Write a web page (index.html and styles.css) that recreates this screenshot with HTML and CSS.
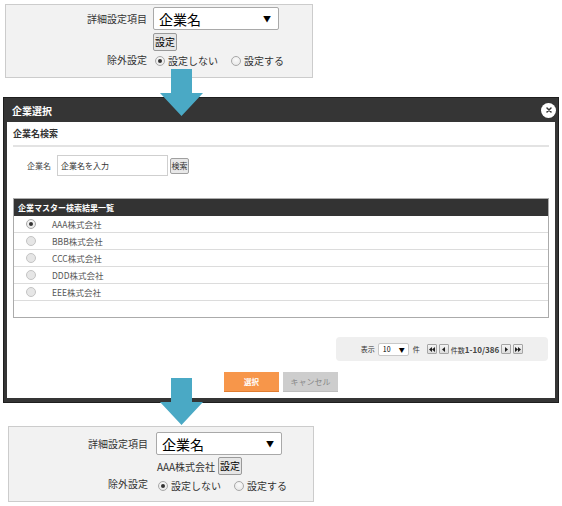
FILE: index.html
```html
<!DOCTYPE html>
<html lang="ja">
<head>
<meta charset="utf-8">
<title>企業選択</title>
<link rel="stylesheet" href="styles.css">
</head>
<body>
<div class="page">
  <div class="panel panel-top">
    <div class="form">
      <div class="lbl">詳細設定項目</div>
      <div class="select"><span class="sel-text">企業名</span><span class="caret">▼</span></div>
      <div></div>
      <div class="val"><button class="btn-set">設定</button></div>
      <div class="lbl">除外設定</div>
      <div class="radios">
        <span class="radio checked"></span><span class="rtext">設定しない</span>
        <span class="radio gap"></span><span class="rtext">設定する</span>
      </div>
    </div>
  </div>

  <div class="modal">
    <div class="modal-head">
      <span class="modal-title">企業選択</span>
      <span class="close">
        <svg width="6" height="6" viewBox="0 0 6 6"><path d="M1 1L5 5M5 1L1 5" stroke="#333" stroke-width="1.5" stroke-linecap="round"/></svg>
      </span>
    </div>
    <div class="modal-body">
      <div class="section-title">企業名検索</div>
      <div class="search-row">
        <span class="s-label">企業名</span>
        <span class="s-input">企業名を入力</span>
        <button class="btn-search">検索</button>
      </div>
      <div class="result">
        <div class="result-head">企業マスター検索結果一覧</div>
        <div class="row"><span class="radio checked"></span><span class="rname">AAA株式会社</span></div>
        <div class="row"><span class="radio"></span><span class="rname">BBB株式会社</span></div>
        <div class="row"><span class="radio"></span><span class="rname">CCC株式会社</span></div>
        <div class="row"><span class="radio"></span><span class="rname">DDD株式会社</span></div>
        <div class="row"><span class="radio"></span><span class="rname">EEE株式会社</span></div>
        <div class="row empty"></div>
      </div>
      <div class="pager-wrap">
        <div class="pager">
          <span class="p-text">表示</span>
          <span class="p-select"><span>10</span><span class="p-caret">▼</span></span>
          <span class="p-text p-ken">件</span>
          <span class="p-btn p-first"><svg width="6" height="5" viewBox="0 0 6 5"><path d="M3 0L0 2.5L3 5Z M6 0L3 2.5L6 5Z" fill="#222"/></svg></span>
          <span class="p-btn"><svg width="3" height="5" viewBox="0 0 3 5"><path d="M3 0L0 2.5L3 5Z" fill="#222"/></svg></span>
          <span class="p-text p-count">件数<span class="p-num">1-10/386</span></span>
          <span class="p-btn"><svg width="3" height="5" viewBox="0 0 3 5"><path d="M0 0L3 2.5L0 5Z" fill="#222"/></svg></span>
          <span class="p-btn"><svg width="6" height="5" viewBox="0 0 6 5"><path d="M0 0L3 2.5L0 5Z M3 0L6 2.5L3 5Z" fill="#222"/></svg></span>
        </div>
      </div>
      <div class="actions">
        <button class="btn-ok">選択</button>
        <button class="btn-cancel">キャンセル</button>
      </div>
    </div>
  </div>

  <div class="panel panel-bottom">
    <div class="form">
      <div class="lbl">詳細設定項目</div>
      <div class="select"><span class="sel-text">企業名</span><span class="caret">▼</span></div>
      <div></div>
      <div class="val"><span class="chosen">AAA株式会社</span><button class="btn-set">設定</button></div>
      <div class="lbl">除外設定</div>
      <div class="radios">
        <span class="radio checked"></span><span class="rtext">設定しない</span>
        <span class="radio gap"></span><span class="rtext">設定する</span>
      </div>
    </div>
  </div>

  <svg class="arrow arrow-1" width="43" height="47" viewBox="0 0 43 47"><path d="M11 0H32V24H43L21.5 47L0 24H11Z" fill="#4aa9c5"/></svg>
  <svg class="arrow arrow-2" width="43" height="47" viewBox="0 0 43 47"><path d="M11 0H32V24H43L21.5 47L0 24H11Z" fill="#4aa9c5"/></svg>
</div>
</body>
</html>
```

FILE: styles.css
```css
* { box-sizing: border-box; }
html, body { margin: 0; padding: 0; background: #fff; }
body {
  font-family: "Noto Sans CJK JP", "Noto Sans", sans-serif;
  color: #333;
  width: 562px;
  height: 506px;
  overflow: hidden;
}
button { font-family: inherit; margin: 0; }

.page { position: relative; width: 562px; height: 506px; padding-top: 4px; }

/* settings panels */
.panel {
  background: #f2f2f2;
  border: 1px solid #cccccc;
}
.panel-top { margin-left: 5px; width: 308px; height: 74px; padding-top: 2px; }
.panel-bottom { margin-left: 8px; margin-top: 23px; width: 306px; height: 76px; padding-top: 5px; }

.form {
  display: grid;
  grid-template-columns: 141px auto;
  column-gap: 6px;
  align-items: center;
}
.panel-bottom .form { grid-template-columns: 139px auto; column-gap: 8px; }
.lbl { text-align: right; font-size: 10px; color: #333; line-height: 14px; }
.select {
  width: 126px; height: 23px;
  background: #fff;
  border: 1px solid #a9a9a9;
  border-radius: 2px;
  display: flex; align-items: center; justify-content: space-between;
  padding: 0 7px 0 5px;
}
.sel-text { font-size: 14px; color: #000; line-height: 20px; }
.caret { font-size: 8px; color: #000; }
.val { display: flex; align-items: center; margin-top: 3px; }
.panel-bottom .val { margin-top: 2px; }
.chosen { font-size: 10px; color: #333; margin-left: 1px; margin-right: 3px; }
.btn-set {
  width: 24px; height: 18px; padding: 0;
  font-size: 10px; line-height: 16px; color: #000;
  background: #e6e6e6;
  border: 1px solid #9a9a9a;
  border-radius: 2px;
}
.radios { display: flex; align-items: center; margin-top: 3px; height: 14px; }
.panel-bottom .radios { margin-top: 4px; }
.radio {
  width: 10px; height: 10px; border-radius: 50%;
  border: 1px solid #a8a8a8;
  background: radial-gradient(circle at 50% 35%, #fafafa 0%, #e4e4e4 100%);
  position: relative;
  flex: none;
  margin-left: 2px;
}
.radio.checked::after {
  content: ""; position: absolute; left: 2px; top: 2px;
  width: 4px; height: 4px; border-radius: 50%; background: #333;
}
.radio.gap { margin-left: 13px; }
.rtext { font-size: 10px; color: #333; margin-left: 3px; line-height: 14px; }

/* modal */
.modal {
  margin-top: 19px; margin-left: 3px;
  width: 556px; height: 306px;
  background: #353535;
  border: 1px solid #1e1e1e;
}
.modal-head {
  height: 24px;
  display: flex; align-items: center; justify-content: space-between;
  padding: 0 2px 0 8px;
}
.modal-title { color: #fff; font-size: 10px; font-weight: bold; }
.close {
  width: 15px; height: 15px; border-radius: 50%;
  background: #fff;
  display: flex; align-items: center; justify-content: center;
}
.modal-body {
  margin: 0 3px;
  height: 276px;
  background: #fff;
  padding: 0 6px;
}
.section-title {
  padding-top: 5px; padding-bottom: 4px;
  font-size: 9px; font-weight: bold; line-height: 14px; color: #333;
  border-bottom: 2px solid #e3e3e3;
}
.search-row { display: flex; align-items: center; margin-top: 8px; padding-left: 14px; height: 21px; }
.s-label { font-size: 8px; color: #444; margin-right: 6px; }
.s-input {
  width: 111px; height: 21px;
  border: 1px solid #cfcfcf;
  font-size: 8px; line-height: 19px; color: #333;
  padding-left: 3px;
}
.btn-search {
  margin-left: 2px; width: 19px; height: 16px; padding: 0;
  font-size: 8px; line-height: 14px; color: #333;
  background: #e8e8e8; border: 1px solid #a0a0a0; border-radius: 2px;
}

.result { margin-top: 22px; border: 1px solid #ababab; }
.result-head {
  height: 17px; background: #333;
  color: #fff; font-size: 8px; font-weight: bold; line-height: 17px;
  padding-left: 4px;
}
.row {
  height: 17px; border-bottom: 1px solid #dcdcdc;
  display: flex; align-items: center;
  padding-left: 10px;
}
.row .radio { background: #e6e6e6; border-color: #c4c4c4; }
.row .radio.checked { background: radial-gradient(circle at 50% 35%, #fafafa 0%, #e4e4e4 100%); border-color: #a8a8a8; }
.row.empty { border-bottom: none; height: 16px; }
.rname { font-size: 8.5px; color: #555; margin-left: 16px; }

.pager-wrap { display: flex; justify-content: flex-end; margin-top: 19px; padding-right: 1px; }
.pager {
  width: 212px; height: 24px;
  background: #efefef; border-radius: 4px;
  display: flex; align-items: center; justify-content: center;
}
.p-text { font-size: 7px; color: #333; }
.p-num { font-size: 8px; font-weight: bold; color: #444; }
.p-select {
  width: 31px; height: 13px; margin-left: 3px;
  background: #fff; border: 1px solid #c8c8c8; border-radius: 2px;
  display: flex; align-items: center; justify-content: space-between;
  padding: 0 3px 0 4px;
  font-size: 7px; color: #000;
}
.p-caret { font-size: 6px; }
.p-ken { margin-left: 4px; margin-right: 7px; }
.p-btn {
  width: 10px; height: 10px;
  background: linear-gradient(#f4f4f4, #dcdcdc);
  border: 1px solid #a5a5a5; border-radius: 1px;
  display: flex; align-items: center; justify-content: center;
  margin-right: 2px;
}
.p-btn:last-child { margin-right: 0; }
.p-count { margin-right: 2px; }

.actions { display: flex; justify-content: center; gap: 4px; margin-top: 11px; }
.btn-ok {
  width: 55px; height: 20px; padding: 0;
  background: #f7964a; border: none; border-bottom: 1px solid #e07c30;
  color: #fff; font-size: 7.5px; font-weight: bold;
}
.btn-cancel {
  width: 55px; height: 20px; padding: 0;
  background: #cdcdcd; border: none; border-bottom: 1px solid #bdbdbd;
  color: #888; font-size: 8px;
}

/* arrows overlaying the panels */
.arrow { position: absolute; }
.arrow-1 { left: 160px; top: 69px; }
.arrow-2 { left: 160px; top: 378px; }
```
